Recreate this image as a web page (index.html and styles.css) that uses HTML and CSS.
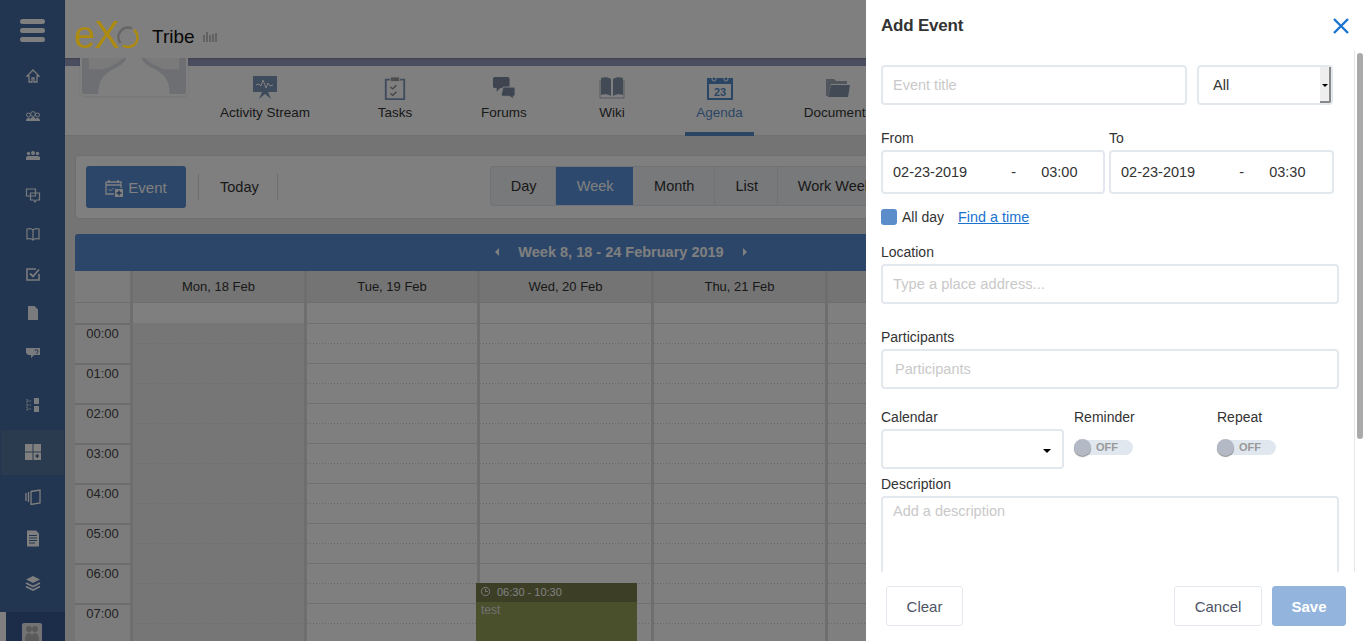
FILE: index.html
```html
<!DOCTYPE html>
<html lang="en">
<head>
<meta charset="utf-8">
<title>Agenda</title>
<link rel="stylesheet" href="styles.css">
</head>
<body>
<div class="app">
  <aside class="side">
    <div class="burger"><i></i><i></i><i></i></div>
    <div class="side-items">
      <svg class="si" viewBox="0 0 16 16"><path d="M8 2 2 8h2v6h3v-4h2v4h3V8h2z" fill="none" stroke="currentColor" stroke-width="1.3"/></svg>
      <svg class="si" viewBox="0 0 16 16"><g fill="none" stroke="currentColor" stroke-width="1"><circle cx="8" cy="6" r="2.4"/><circle cx="3.5" cy="7" r="2"/><circle cx="12.5" cy="7" r="2"/></g><path d="M1 13c0-2 1-3 2.5-3S6 11 6 13zM5 13c0-2 1-4 3-4s3 2 3 4zM10 13c0-2 1-3 2.500-3s2.500 1 2.500 3z" fill="currentColor"/></svg>
      <svg class="si" viewBox="0 0 16 16"><g fill="currentColor"><circle cx="8" cy="6" r="2"/><circle cx="3.500" cy="6.500" r="1.700"/><circle cx="12.500" cy="6.500" r="1.700"/><path d="M1 13v-3l2-1h10l2 1v3z"/></g></svg>
      <svg class="si" viewBox="0 0 16 16"><path d="M1.500 2h9v7h-9zM5.500 6h9v7h-3l-1.500 2-1-2H5.500z" fill="none" stroke="currentColor" stroke-width="1.200"/></svg>
      <svg class="si" viewBox="0 0 16 16"><path d="M8 4C6.500 2.500 4 2.500 2 3v10c2-.5 4.500-.5 6 1 1.500-1.500 4-1.500 6-1V3c-2-.5-4.500-.5-6 1zv10" fill="none" stroke="currentColor" stroke-width="1.200"/></svg>
      <svg class="si" viewBox="0 0 16 16"><path d="M14 8v6H2V3h9" fill="none" stroke="currentColor" stroke-width="1.600"/><path d="m5 7.500 3 3 6-7" fill="none" stroke="currentColor" stroke-width="1.800"/></svg>
      <svg class="si" viewBox="0 0 16 16"><path d="M3 1h6.500L13 4.500V15H3z" fill="currentColor"/></svg>
      <svg class="si" viewBox="0 0 16 16"><path d="M1 3h14v7H9l-3 3v-3H3L1 8z" fill="currentColor"/><path d="M10 6a1.500 1.500 0 1 1 2 1.500V9" fill="none" stroke="#456a9e" stroke-width="1"/></svg>
    </div>
    <div class="side-admin">
      <svg class="si" viewBox="0 0 16 16"><path d="M9 1h5v6H9zM9 9h5v6H9z" fill="currentColor"/><path d="M2 2v12M2 4h4M2 8h4M2 12h4" stroke="currentColor" stroke-dasharray="1.500 1" fill="none"/></svg>
      <div class="si-active"><svg class="si-lg" viewBox="0 0 16 16"><path d="M0 0h7.500v7.500H0zM8.500 0H16v7.500H8.500zM0 8.500h7.500V16H0zM8.500 8.500H16V16H8.500z" fill="currentColor"/><path d="M12.250 10v4M10.250 12h4" stroke="#3a5a87" stroke-width="1.200"/></svg></div>
      <svg class="si-lg" viewBox="0 0 16 16"><path d="M6 2.500 15 1v13l-9 1.500z" fill="none" stroke="currentColor" stroke-width="1.300"/><path d="M3.500 3v10M1 4v8" stroke="currentColor" stroke-width="1.300"/></svg>
      <svg class="si-lg si-doc" viewBox="0 0 16 16"><path d="M2 0h9l3 3v13H2z" fill="currentColor"/><path d="M4 5h8M4 7.500h8M4 10h8M4 12.500h6" stroke="#446a9e" stroke-width="1"/></svg>
      <svg class="si-lg" viewBox="0 0 16 16"><path d="m8 1 7 3.500L8 8 1 4.500z" fill="currentColor"/><path d="m1 8 7 3.500L15 8M1 11.500 8 15l7-3.500" fill="none" stroke="currentColor" stroke-width="1.700"/></svg>
    </div>
    <div class="side-user"><svg class="avatar" viewBox="0 0 20 18"><path d="M0 2q0-2 2-2h16q2 0 2 2v16H0z" fill="#e6e6e6"/><circle cx="7" cy="6" r="3" fill="#b5b5b5"/><circle cx="13" cy="6" r="3" fill="#b5b5b5"/><path d="M3 18c0-6 2-8 4-8s4 2 4 8zM9 18c0-6 2-8 4-8s4 2 4 8z" fill="#b5b5b5"/></svg></div>
  </aside>
  <main class="main">
    <header class="topbar">
      <span class="logo"><span class="logo-e">e</span><span class="logo-x">X</span><svg class="logo-o" viewBox="0 0 22 22"><path d="M6 19.500A9.500 9.500 0 0 0 20.500 11 9.500 9.500 0 0 0 17 4" fill="none" stroke="#ad8b10" stroke-width="2.500"/><path d="M15 2.500A9.500 9.500 0 0 0 3.500 17" fill="none" stroke="#666" stroke-width="2.500"/></svg></span>
      <span class="brand">Tribe</span>
      <svg class="bars" viewBox="0 0 15 11"><path d="M1 4v7M4 1v10M7 4v7M10 3v8M13 2v9" stroke="#bbb" stroke-width="1.700"/></svg>
    </header>
    <div class="banner"></div>
    <nav class="tabs">
      <div class="cover">
        <svg class="cover-art" viewBox="0 0 108 38" preserveAspectRatio="none"><path d="M0 0h108v38H0z" fill="#dcdee4"/><path d="M7 0h36l-3 3C34 7 28 10 22 12H7zM101 0H65l3 3c6 4 12 7 18 9h15z" fill="#f4f4f4"/><path d="M17 38C17 22 24 17 32 12c6-3 12-6 14-12h16c2 6 8 9 14 12 8 5 15 10 15 26z" fill="#fff"/></svg>
      </div>
      <a class="tab t-as"><svg viewBox="0 0 26 24"><path d="M1 0h24v16H16l3 7-6-5-6 5 3-7H1z" fill="#7d96bb"/><path d="m4 9 3-1 2 2 2-6 3 8 2-5 2 3 3-1" fill="none" stroke="#fff" stroke-width="1"/></svg><span>Activity Stream</span></a>
      <a class="tab t-ta"><svg viewBox="0 0 24 26"><path d="M2 4h20v21H2z" fill="none" stroke="#7d96bb" stroke-width="2"/><path d="M7 1h10v5H7z" fill="#9b9b9b" stroke="#fff"/><path d="m7 12 2.500 2 4-4M7 19l2.500 2 4-4" fill="none" stroke="#888" stroke-width="1.500"/></svg><span>Tasks</span></a>
      <a class="tab t-fo"><svg viewBox="0 0 26 26"><path d="M3 1h14q2 0 2 2v8q0 2-2 2H9l-4 4v-4H3q-2 0-2-2V3q0-2 2-2z" fill="#7d8ba3"/><path d="M12 12h11q2 0 2 2v6q0 2-2 2v3l-4-3h-7q-2 0-2-2z" fill="#7d8ba3" stroke="#fff"/></svg><span>Forums</span></a>
      <a class="tab t-wi"><svg viewBox="0 0 26 24"><path d="M12 3C9 1 5 1 2 2v17c3-1 7-1 10 1zM14 3c3-2 7-2 10-1v17c-3-1-7-1-10 1z" fill="#8594ad"/><path d="M1 4v18h24V4" fill="none" stroke="#a9b1bf"/></svg><span>Wiki</span></a>
      <a class="tab t-ag active"><svg viewBox="0 0 26 24"><path d="M1 3h24v20H1z" fill="#fff" stroke="#578dc9" stroke-width="2"/><path d="M1 3h24v5H1z" fill="#578dc9"/><circle cx="7" cy="3" r="2" fill="#578dc9" stroke="#fff"/><circle cx="19" cy="3" r="2" fill="#578dc9" stroke="#fff"/><text x="13" y="20" class="cal-num">23</text></svg><span>Agenda</span></a>
      <a class="tab t-do"><svg viewBox="0 0 26 20"><path d="M1 3V1h8l2 2h11v3H6L3 18H1z" fill="#a3acbb"/><path d="M6 7h19l-2 12H3z" fill="#8594ad"/></svg><span>Documents</span></a>
    </nav>
    <section class="toolbar">
      <button class="btn-event"><svg viewBox="0 0 19 18"><path d="M1 3h15v6M9 15H1V3M1 6h15" fill="none" stroke="currentColor" stroke-width="1.300"/><path d="M4 1v3M13 1v3" stroke="currentColor" stroke-width="1.500"/><path d="m3.500 10 2 2 3-3" fill="none" stroke="currentColor"/><path d="M10 10h8v8h-8z" fill="currentColor"/><path d="M14 11.500v5M11.500 14h5" stroke="#3a6aa8" stroke-width="1.400"/></svg>Event</button>
      <span class="sep"></span>
      <span class="today">Today</span>
      <span class="sep"></span>
      <div class="views">
        <span class="view v-day">Day</span>
        <span class="view v-week active">Week</span>
        <span class="view v-month">Month</span>
        <span class="view v-list">List</span>
        <span class="view v-work">Work Week</span>
      </div>
    </section>
    <section class="cal">
      <div class="cal-title"><span class="arrow arrow-l"></span><span>Week 8, 18 - 24 February 2019</span><span class="arrow arrow-r"></span></div>
      <div class="cal-grid">
        <div class="gh time-col"></div>
        <div class="gh">Mon, 18 Feb</div>
        <div class="gh">Tue, 19 Feb</div>
        <div class="gh">Wed, 20 Feb</div>
        <div class="gh">Thu, 21 Feb</div>
        <div class="gh"></div>
        <div class="allday time-col"></div><div class="allday"></div><div class="allday"></div><div class="allday"></div><div class="allday"></div><div class="allday"></div>
        <div class="time-col hours">
          <div class="tc">00:00</div><div class="tc">01:00</div><div class="tc">02:00</div><div class="tc">03:00</div><div class="tc">04:00</div><div class="tc">05:00</div><div class="tc">06:00</div><div class="tc">07:00</div>
        </div>
        <div class="day past"></div>
        <div class="day"></div>
        <div class="day wed">
          <div class="event"><div class="event-h"><svg viewBox="0 0 12 12"><circle cx="6" cy="6" r="4.500" fill="none" stroke="currentColor"/><path d="M6 3v3h2.500" fill="none" stroke="currentColor"/></svg>06:30 - 10:30</div><div class="event-b">test</div></div>
        </div>
        <div class="day"></div>
        <div class="day"></div>
      </div>
    </section>
  </main>
</div>
<div class="scrim"></div>
<aside class="drawer">
  <div class="dr-head"><h1>Add Event</h1>
    <svg class="close" viewBox="0 0 18 18"><path d="M2 2l14 14M16 2 2 16" stroke="#1a73d0" stroke-width="2.400" fill="none"/></svg>
  </div>
  <div class="dr-body">
    <div class="form">
      <div class="row-title">
        <div class="input grow ph">Event title</div>
        <div class="input sel-all"><span>All</span><span class="spinner"><i></i></span></div>
      </div>
      <div class="row-dates">
        <div class="fld">
          <label>From</label>
          <div class="input dt"><span>02-23-2019</span><span class="dash">-</span><span class="tm">03:00</span></div>
        </div>
        <div class="fld fld-to">
          <label>To</label>
          <div class="input dt"><span>02-23-2019</span><span class="dash">-</span><span class="tm">03:30</span></div>
        </div>
      </div>
      <div class="row-allday"><span class="check"></span><span>All day</span><a class="link">Find a time</a></div>
      <label class="l-loc">Location</label>
      <div class="input ph wide">Type a place address...</div>
      <label class="l-par">Participants</label>
      <div class="input ph wide par">Participants</div>
      <div class="row-three">
        <div class="col-cal"><label>Calendar</label><div class="input cal-sel"><i class="caret"></i></div></div>
        <div class="col-rem"><label>Reminder</label><div class="switch"><span class="knob"></span><span class="off">OFF</span></div></div>
        <div class="col-rep"><label>Repeat</label><div class="switch"><span class="knob"></span><span class="off">OFF</span></div></div>
      </div>
      <label class="l-desc">Description</label>
      <div class="input ph desc">Add a description</div>
    </div>
    <div class="rail"><span class="thumb"></span></div>
  </div>
  <div class="dr-foot">
    <button class="b clear">Clear</button>
    <span class="foot-gap"></span>
    <button class="b cancel">Cancel</button>
    <button class="b save">Save</button>
  </div>
</aside>
</body>
</html>
```

FILE: styles.css
```css
* { box-sizing: border-box; }
html, body { margin: 0; height: 641px; overflow: hidden; }
body { font-family: "Liberation Sans", Arial, sans-serif; font-size: 14px; color: #333; background: #f5f5f5; }
.app { display: flex; height: 641px; overflow: hidden; }

.side { width: 65px; flex: none; background: #446aa2; color: #fff; display: flex; flex-direction: column; align-items: center; position: relative; }
.burger { margin-top: 19px; width: 25px; display: flex; flex-direction: column; gap: 4px; }
.burger i { height: 5px; border-radius: 3px; background: #fff; }
.side-items { margin-top: 26px; display: flex; flex-direction: column; align-items: center; gap: 23.550px; }
.si { width: 16px; height: 16px; display: block; color: #fff; opacity: .95; flex: none; }
.side-admin { margin-top: 36px; width: 100%; display: flex; flex-direction: column; align-items: center; gap: 22px; }
.si-active { width: 63px; height: 45px; margin: -5px 0 -8px; display: flex; align-items: center; justify-content: center; background: #55779f; }
.si-lg { width: 16px; height: 16px; color: #fff; display: block; flex: none; }
.si-doc { height: 17px; margin: 3px 0 0; }
.si-doc + .si-lg { margin-top: 6px; }
.side-user { position: absolute; left: 6px; right: 0; bottom: 0; height: 29px; background: #385a94; }
.side-user::before { content: ""; position: absolute; left: -6px; top: 0; bottom: 0; width: 6px; background: #fff; }
.avatar { display: block; width: 20px; height: 18px; margin: 11px 0 0 16px; }

.main { flex: 1; min-width: 0; background: #e8e8e8; }
.topbar { height: 58px; background: #fff; display: flex; align-items: center; padding: 12px 0 0 9px; position: relative; box-shadow: 0 1px 2px rgba(0,0,0,.2); }
.logo { display: flex; align-items: flex-end; height: 32px; width: 66px; color: #ad8b10; font-size: 38px; line-height: 32px; position: relative; z-index: 6; }
.logo-e { margin-right: -1px; }
.logo-x { margin-right: -3px; }
.logo-o { width: 22px; height: 22px; flex: none; margin-bottom: 3px; }
.brand { margin: 3px 0 0 12px; font-size: 19px; color: #111; }
.bars { width: 15px; height: 11px; margin: 3px 0 0 8px; }
.banner { height: 8px; background: #969cbf; }
.tabs { height: 70px; background: #fff; display: flex; border-bottom: 1px solid #e0e0e0; position: relative; }
.cover { position: absolute; left: 17px; top: -8px; width: 104px; height: 36px; background: #dcdee4; border-radius: 0 0 3px 3px; box-shadow: 0 0 0 2px #fff, 0 1px 3px 2px rgba(0,0,0,.1); overflow: hidden; }
.cover-art { display: block; width: 100%; height: 100%; }
.tab { position: absolute; top: 0; height: 70px; display: flex; flex-direction: column; align-items: center; font-size: 13.500px; color: #333; padding-top: 10px; }
.tab svg { width: 26px; height: 24px; margin-bottom: 5px; }
.tab span { white-space: nowrap; line-height: 15px; }
.t-as { left: 155px; width: 90px; }
.t-ta { left: 305px; width: 50px; }
.t-fo { left: 414px; width: 50px; }
.t-wi { left: 522px; width: 50px; }
.t-ag { left: 620px; width: 69px; color: #578dc9; border-bottom: 4px solid #578dc9; }
.t-do { left: 741px; width: 64px; }
.cal-num { font: 700 11px "Liberation Sans", sans-serif; fill: #578dc9; text-anchor: middle; }

.toolbar { margin: 20px 0 0 11px; height: 62px; background: #fff; display: flex; align-items: center; padding-left: 10px; border-radius: 3px; box-shadow: 0 0 2px rgba(0,0,0,.15); position: relative; overflow: hidden; }
.btn-event { width: 100px; height: 42px; background: #578cd0; color: #fff; border: 0; border-radius: 3px; font: 15px "Liberation Sans", sans-serif; display: flex; align-items: center; justify-content: center; gap: 4px; padding: 0; }
.btn-event svg { width: 19px; height: 18px; margin-top: 2px; }
.sep { width: 1px; height: 26px; background: #ddd; }
.btn-event + .sep { margin-left: 12px; }
.today { margin: 0 18px 0 21px; font-size: 14.500px; }
.views { margin: 0 0 2px 212px; height: 40px; display: flex; flex: none; border: 1px solid #e0e4ea; border-radius: 3px; background: #f0f2f5; font-size: 14.500px; overflow: hidden; }
.view { display: flex; align-items: center; justify-content: center; border-right: 1px solid #e0e4ea; padding-left: 2px; }
.v-day { width: 65px; }
.v-week { width: 77px; background: #5a94dc; color: #fff; border: 0; }
.v-month { width: 82px; }
.v-list { width: 63px; }
.v-work { width: 120px; white-space: nowrap; border: 0; justify-content: flex-start; padding-left: 20px; }

.cal { margin: 16px 0 0 10px; position: relative; }
.cal-title { height: 37px; background: #578cd0; color: #fff; border-radius: 3px 3px 0 0; font-weight: 700; font-size: 14.500px; display: flex; align-items: center; justify-content: center; gap: 19px; width: 1092px; padding-bottom: 2px; }
.arrow { width: 0; height: 0; border: 4px solid transparent; }
.arrow-l { border-right-color: #fff; border-left: 0; }
.arrow-r { border-left-color: #fff; border-right: 0; }
.cal-grid { display: grid; grid-template-columns: 55px 171px 170px 171px 171px 171px; grid-template-rows: 32px 20px auto; column-gap: 3px; background: #dcdcdc; width: 1092px; }
.gh { background: #e8e8e8; display: flex; align-items: center; justify-content: center; font-size: 13px; border-bottom: 1px solid #dcdcdc; }
.gh.time-col { background: #f8f8f8; }
.allday { background: #fff; }
.allday.time-col { background: #f8f8f8; }
.hours { background: #f8f8f8; }
.tc { height: 40px; border-top: 2px solid #d8d8d8; padding-top: 1px; text-align: center; font-size: 13px; line-height: 16px; color: #444; }
.day { height: 330px; position: relative; background-color: #fff; background-image: repeating-linear-gradient(to bottom, #dedede 0 1px, transparent 1px 40px); }
.day::before { content: ""; position: absolute; inset: 0; background: repeating-linear-gradient(to right, #d0d0d0 0 1px, transparent 1px 3px); -webkit-mask-image: repeating-linear-gradient(to bottom, transparent 0 20px, #000 20px 21px, transparent 21px 40px); mask-image: repeating-linear-gradient(to bottom, transparent 0 20px, #000 20px 21px, transparent 21px 40px); }
.day.past { background-color: #ececec; background-image: none; }
.event { position: absolute; left: -4px; top: 260px; width: 161px; height: 100px; background: #949e58; z-index: 1; }
.event-h { height: 19px; background: #787e4c; font-size: 11px; color: #fff; display: flex; align-items: center; gap: 6px; padding: 0 0 2px 4px; }
.event-h svg { width: 11px; height: 11px; }
.event-b { color: #e0e0e0; font-size: 12px; padding: 1px 5px 0; }

.scrim { position: fixed; inset: 0 500px 0 0; background: rgba(0,0,0,.5); z-index: 5; }

.drawer { position: fixed; top: 0; right: 0; width: 500px; height: 641px; background: #fff; display: flex; flex-direction: column; color: #333; z-index: 7; }
.dr-head { height: 50px; flex: none; display: flex; align-items: center; justify-content: space-between; padding: 0 16px 0 15px; }
.dr-head h1 { margin: 1px 0 0; font-size: 17px; font-weight: 700; letter-spacing: -.2px; color: #333; }
.close { width: 18px; height: 18px; margin-top: 1px; }
.dr-body { flex: 1; min-height: 0; display: flex; overflow: hidden; }
.form { width: 488px; padding: 15px 15px 0 15px; flex: none; }
.rail { width: 12px; flex: none; border-left: 1px solid #e8e8e8; padding: 3px 0 0 2px; }
.thumb { display: block; width: 6px; height: 386px; border-radius: 3px; background: #aaa; }
.input { border: 2px solid #e3e8ee; border-radius: 4px; background: #fff; display: flex; align-items: center; font-size: 14.500px; padding: 0 10px; }
.ph { color: #c9c9c9; }
.row-title { display: flex; gap: 10px; height: 40px; margin-right: 6px; }
.grow { flex: 1; }
.sel-all { width: 136px; padding: 0 0 0 14px; color: #333; position: relative; }
.spinner { position: absolute; right: 0; top: 0; bottom: 0; width: 11px; background: #eee; border-right: 2px solid #888; border-bottom: 2px solid #888; border-radius: 0 0 2px 0; display: flex; align-items: center; justify-content: center; }
.spinner i { width: 0; height: 0; border: 3px solid transparent; border-top-color: #000; border-bottom: 0; margin-top: 2px; }
.row-dates { display: flex; gap: 4px; margin-top: 24px; }
.fld { width: 224px; }
.fld-to { width: 225px; }
.fld label { display: block; height: 21px; line-height: 18px; }
.dt { height: 44px; padding: 0 0 0 10px; }
.dash { margin-left: 44px; width: 30px; }
.row-allday { display: flex; align-items: center; margin-top: 14px; height: 18px; }
.check { width: 16px; height: 16px; border-radius: 3px; background: #5b8dcb; margin-right: 5px; }
.link { color: #1a73d0; text-decoration: underline; margin-left: 14px; font-size: 14.400px; }
.l-loc, .l-par, .l-desc, .row-three label { display: block; line-height: 16px; }
.l-loc { margin-top: 18px; }
.wide { height: 40px; margin-top: 4px; font-size: 14.700px; }
.l-par { margin-top: 25px; }
.par { padding-left: 12px; font-size: 14.500px; }
.row-three { display: flex; margin-top: 20px; }
.col-cal { width: 193px; flex: none; }
.col-rem, .col-rep { width: 143px; flex: none; }
.cal-sel { width: 183px; height: 40px; margin-top: 4px; position: relative; }
.caret { position: absolute; right: 11px; top: 18px; border: 4px solid transparent; border-top-color: #000; border-bottom: 0; }
.switch { position: relative; width: 59px; height: 15px; margin-top: 15px; border-radius: 8px; background: #e0e7ef; font-size: 11px; font-weight: 700; color: #999; line-height: 15px; padding-left: 22px; }
.knob { position: absolute; left: 0; top: -1px; width: 17px; height: 17px; border-radius: 50%; background: #b3bac5; box-shadow: 0 1px 1px rgba(0,0,0,.45); }
.l-desc { margin-top: 7px; }
.desc { height: 120px; margin-top: 4px; align-items: flex-start; padding-top: 5px; }
.dr-foot { height: 69px; flex: none; background: #fff; display: flex; align-items: flex-start; padding: 14px 20px 0; position: relative; }
.foot-gap { flex: 1; }
.b { height: 40px; background: #fff; border: 1px solid #e3e8ee; border-radius: 3px; font: 15px "Liberation Sans", sans-serif; color: #4d5466; padding: 0; }
.clear { width: 77px; }
.cancel { width: 88px; margin-right: 10px; }
.save { width: 74px; background: #93b4dc; border-color: #93b4dc; color: #fff; font-weight: 700; }
```
